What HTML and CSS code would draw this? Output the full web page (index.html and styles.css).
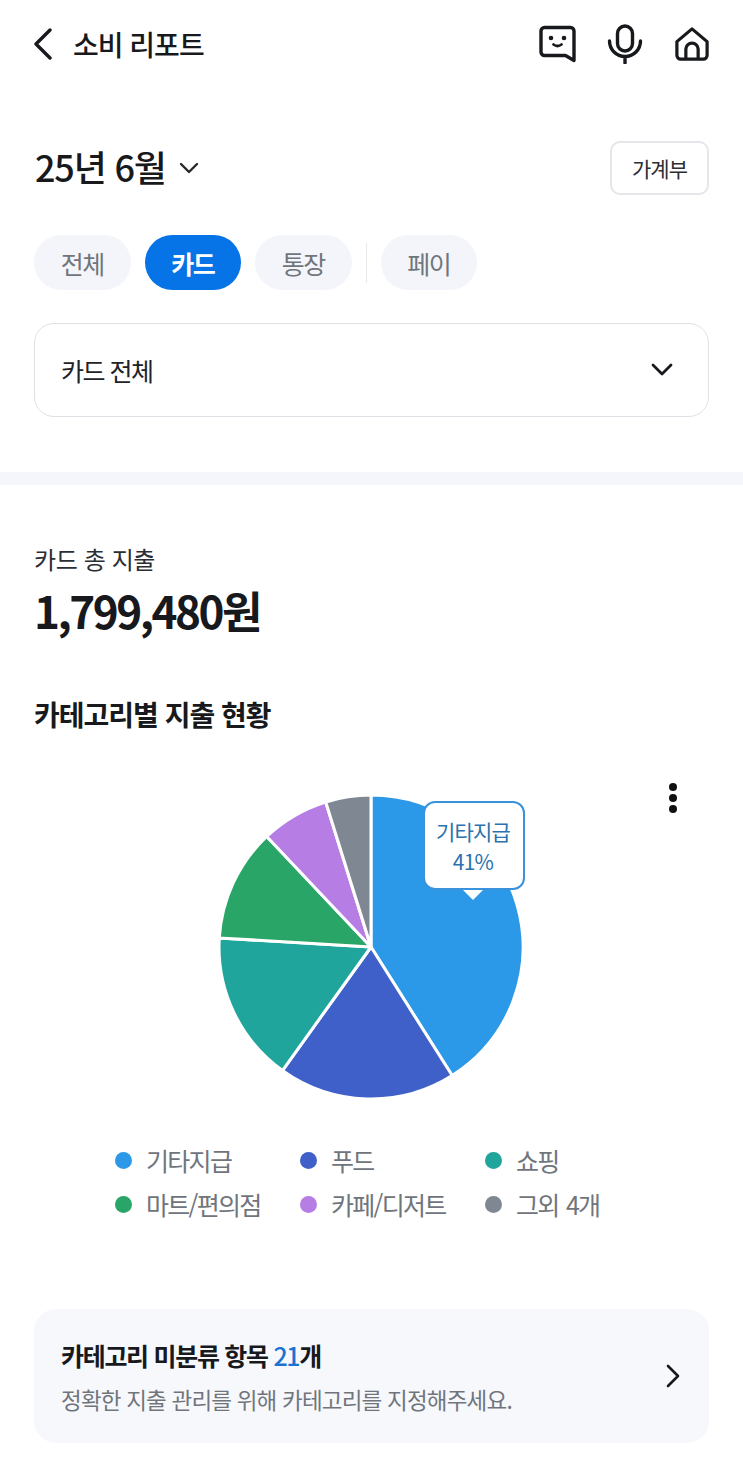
FILE: index.html
```html
<!DOCTYPE html>
<html lang="ko">
<head>
<meta charset="utf-8">
<title>소비 리포트</title>
<link rel="stylesheet" href="styles.css">
</head>
<body>
<header class="topbar">
  <div class="topbar-left">
    <svg class="back" width="20" height="32" viewBox="0 0 20 32"><path d="M17 2 3 16l14 14" fill="none" stroke="#17191c" stroke-width="3.4" stroke-linecap="round" stroke-linejoin="round"/></svg>
    <h1 class="title">소비 리포트</h1>
  </div>
  <div class="topbar-icons">
    <svg width="38" height="38" viewBox="0 0 38 38"><path d="M5.500 2.500h26a3.500 3.500 0 0 1 3.500 3.500v29.500l-8.500-5H5.500A3.500 3.500 0 0 1 2 27V6a3.500 3.500 0 0 1 3.500-3.500Z" fill="none" stroke="#17191c" stroke-width="3.400" stroke-linejoin="round"/><circle cx="12" cy="13" r="2.300" fill="#17191c"/><circle cx="25" cy="13" r="2.300" fill="#17191c"/><path d="M14.500 19.500q4 3 8 0" fill="none" stroke="#17191c" stroke-width="2.800" stroke-linecap="round"/></svg>
    <svg width="36" height="40" viewBox="0 0 36 40"><rect x="10.500" y="2" width="15" height="25" rx="7.500" fill="none" stroke="#17191c" stroke-width="3.400"/><path d="M2.500 17a15.500 15.500 0 0 0 31 0M18 32.500V39" fill="none" stroke="#17191c" stroke-width="3.400" stroke-linecap="round"/></svg>
    <svg class="home" width="34" height="34" viewBox="0 0 36 36"><path d="M2 15.500 18 2l16 13.500V30a4 4 0 0 1-4 4H6a4 4 0 0 1-4-4Z" fill="none" stroke="#17191c" stroke-width="3.400" stroke-linejoin="round"/><path d="M11.500 34V23.500a6.500 6.500 0 0 1 13 0V34" fill="none" stroke="#17191c" stroke-width="3.400"/></svg>
  </div>
</header>

<section class="filters">
  <div class="date-row">
    <div class="date">
      <span class="date-text">25년 6월</span>
      <svg width="20" height="12" viewBox="0 0 20 12"><path d="m2 2 8 8 8-8" fill="none" stroke="#26292d" stroke-width="2.400" stroke-linecap="round" stroke-linejoin="round"/></svg>
    </div>
    <button class="ledger">가계부</button>
  </div>
  <div class="chips">
    <span class="chip">전체</span>
    <span class="chip chip-active">카드</span>
    <span class="chip">통장</span>
    <span class="chip-divider"></span>
    <span class="chip">페이</span>
  </div>
  <div class="select">
    <span>카드 전체</span>
    <svg width="22" height="14" viewBox="0 0 22 14"><path d="m2 2 9 9 9-9" fill="none" stroke="#17191c" stroke-width="2.800" stroke-linecap="round" stroke-linejoin="round"/></svg>
  </div>
</section>

<div class="band"></div>

<section class="report">
  <p class="total-label">카드 총 지출</p>
  <p class="total">1,799,480원</p>
  <h2 class="section-title">카테고리별 지출 현황</h2>

  <div class="chart">
    <svg class="pie" width="304" height="304" viewBox="-151 -151 302 302">
      <g stroke="#fff" stroke-width="3" stroke-linejoin="round">
        <path d="M0 0V-151A151 151 0 0 1 80.600 127.700Z" fill="#2b98e8"/>
        <path d="M0 0 80.600 127.700A151 151 0 0 1 -88 122.700Z" fill="#3f60c8"/>
        <path d="M0 0-88 122.700A151 151 0 0 1 -150.700 -9Z" fill="#1fa59b"/>
        <path d="M0 0-150.700 -9A151 151 0 0 1 -103.600 -109.800Z" fill="#29a568"/>
        <path d="M0 0-103.600 -109.800A151 151 0 0 1 -45 -144.100Z" fill="#b67de5"/>
        <path d="M0 0-45 -144.100A151 151 0 0 1 0 -151Z" fill="#7f8892"/>
      </g>
    </svg>
    <div class="tooltip">기타지급<br>41%</div>
    <div class="kebab"><i></i><i></i><i></i></div>
  </div>

  <ul class="legend">
    <li><i class="dot dot-1"></i>기타지급</li>
    <li><i class="dot dot-2"></i>푸드</li>
    <li><i class="dot dot-3"></i>쇼핑</li>
    <li><i class="dot dot-4"></i>마트/편의점</li>
    <li><i class="dot dot-5"></i>카페/디저트</li>
    <li><i class="dot dot-6"></i>그외 4개</li>
  </ul>

  <div class="notice">
    <div>
      <p class="notice-title">카테고리 미분류 항목 <em>21</em>개</p>
      <p class="notice-sub">정확한 지출 관리를 위해 카테고리를 지정해주세요.</p>
    </div>
    <svg width="14" height="24" viewBox="0 0 14 24"><path d="m2 2 10 10L2 22" fill="none" stroke="#17191c" stroke-width="2.600" stroke-linecap="round" stroke-linejoin="round"/></svg>
  </div>
</section>
</body>
</html>
```
FILE: styles.css
```css
* { box-sizing: border-box; }
html, body { margin: 0; padding: 0; }
body {
  background: #fff;
  color: #17191c;
  font-family: "Noto Sans CJK KR", "Noto Sans", sans-serif;
  width: 743px;
  height: 1480px;
  overflow: hidden;
}
p, h1, h2, ul { margin: 0; padding: 0; }
.topbar {
  height: 88px;
  padding: 0 34px 0 33px;
  display: flex;
  align-items: center;
  justify-content: space-between;
}
.topbar-left { display: flex; align-items: center; gap: 20px; }
.back { display: block; }
.title { font-size: 28px; font-weight: 500; letter-spacing: -1px; line-height: 40px; }
.topbar-icons { display: flex; align-items: center; gap: 30px; }
.topbar-icons svg { display: block; }
.topbar-icons .home { margin-left: 2px; }
.filters { padding: 53px 34px 55px; }
.date-row { display: flex; align-items: center; justify-content: space-between; height: 54px; }
.date { display: flex; align-items: center; gap: 13px; }
.date-text { font-size: 36px; font-weight: 500; letter-spacing: -1.200px; line-height: 54px; margin-left: 1px; position: relative; top: -2px; }
.ledger {
  width: 99px; height: 54px;
  background: #fff;
  border: 2px solid #e4e6ea;
  border-radius: 10px;
  font-family: inherit;
  font-size: 21px;
  letter-spacing: -1px;
  color: #2b2e33;
  padding: 0;
}
.chips { display: flex; align-items: center; gap: 14px; margin-top: 40px; }
.chip {
  width: 96.500px; height: 55px;
  border-radius: 28px;
  background: #f3f5fa;
  color: #70757c;
  font-size: 25px;
  letter-spacing: -1.500px;
  display: flex; align-items: center; justify-content: center;
}
.chip-active { background: #0673e6; color: #fff; font-weight: 700; }
.chip-divider { width: 1px; height: 40px; background: #e6e8ec; }
.select {
  margin-top: 33px;
  height: 94px;
  border: 1.500px solid #dfe1e6;
  border-radius: 20px;
  padding: 0 35px 0 26px;
  display: flex; align-items: center; justify-content: space-between;
  font-size: 25px;
  letter-spacing: -1.500px;
  color: #1f2226;
}
.band { height: 13px; background: #f4f6fb; }
.report { padding: 55px 34px 0; }
.total-label { font-size: 24px; letter-spacing: -0.400px; line-height: 38px; color: #2b2e33; }
.total { font-size: 44px; font-weight: 700; letter-spacing: -2.500px; line-height: 62px; margin-top: 1px; }
.section-title { font-size: 28px; font-weight: 700; letter-spacing: -1px; line-height: 40px; margin-top: 53px; }
.chart { position: relative; height: 304px; margin-top: 61px; }
.pie { display: block; position: absolute; left: 185px; top: 0; }
.tooltip {
  position: absolute; left: 389px; top: 6px;
  width: 102px; height: 89px;
  background: #fff;
  border: 2.500px solid #3a93da;
  border-radius: 12px;
  color: #2b72ae;
  font-size: 21px;
  line-height: 30px;
  letter-spacing: -0.800px;
  text-align: center;
  padding: 13px 2px 0 0;
}
.tooltip::after {
  content: "";
  position: absolute; left: 38px; bottom: -12px;
  border-left: 10px solid transparent;
  border-right: 10px solid transparent;
  border-top: 10px solid #fff;
}
.kebab {
  position: absolute; left: 635px; top: -12px;
  display: flex; flex-direction: column; gap: 3px;
}
.kebab i { width: 8px; height: 8px; border-radius: 50%; background: #111; display: block; }
.legend {
  list-style: none;
  margin: 39px 0 0 81px;
  display: grid;
  grid-template-columns: repeat(3, 185px);
  grid-auto-rows: 44px;
  font-size: 25px;
  letter-spacing: -1.700px;
  word-spacing: 2px;
  color: #70757c;
}
.legend li { display: flex; align-items: center; gap: 14px; }
.dot { width: 17px; height: 17px; border-radius: 50%; flex: none; }
.dot-1 { background: #2b98e8; }
.dot-2 { background: #3f60c8; }
.dot-3 { background: #1fa59b; }
.dot-4 { background: #29a568; }
.dot-5 { background: #b67de5; }
.dot-6 { background: #7f8892; }
.notice {
  margin-top: 83px;
  height: 134px;
  background: #f7f8fc;
  border-radius: 22px;
  padding: 0 29px 0 27px;
  display: flex; align-items: center; justify-content: space-between;
}
.notice-title { font-size: 25px; font-weight: 700; letter-spacing: -1.300px; line-height: 38px; }
.notice-title em { font-style: normal; color: #1a73d2; font-weight: 500; }
.notice-sub { font-size: 22.500px; letter-spacing: -0.800px; line-height: 34px; color: #70757c; margin-top: 8px; }
```
